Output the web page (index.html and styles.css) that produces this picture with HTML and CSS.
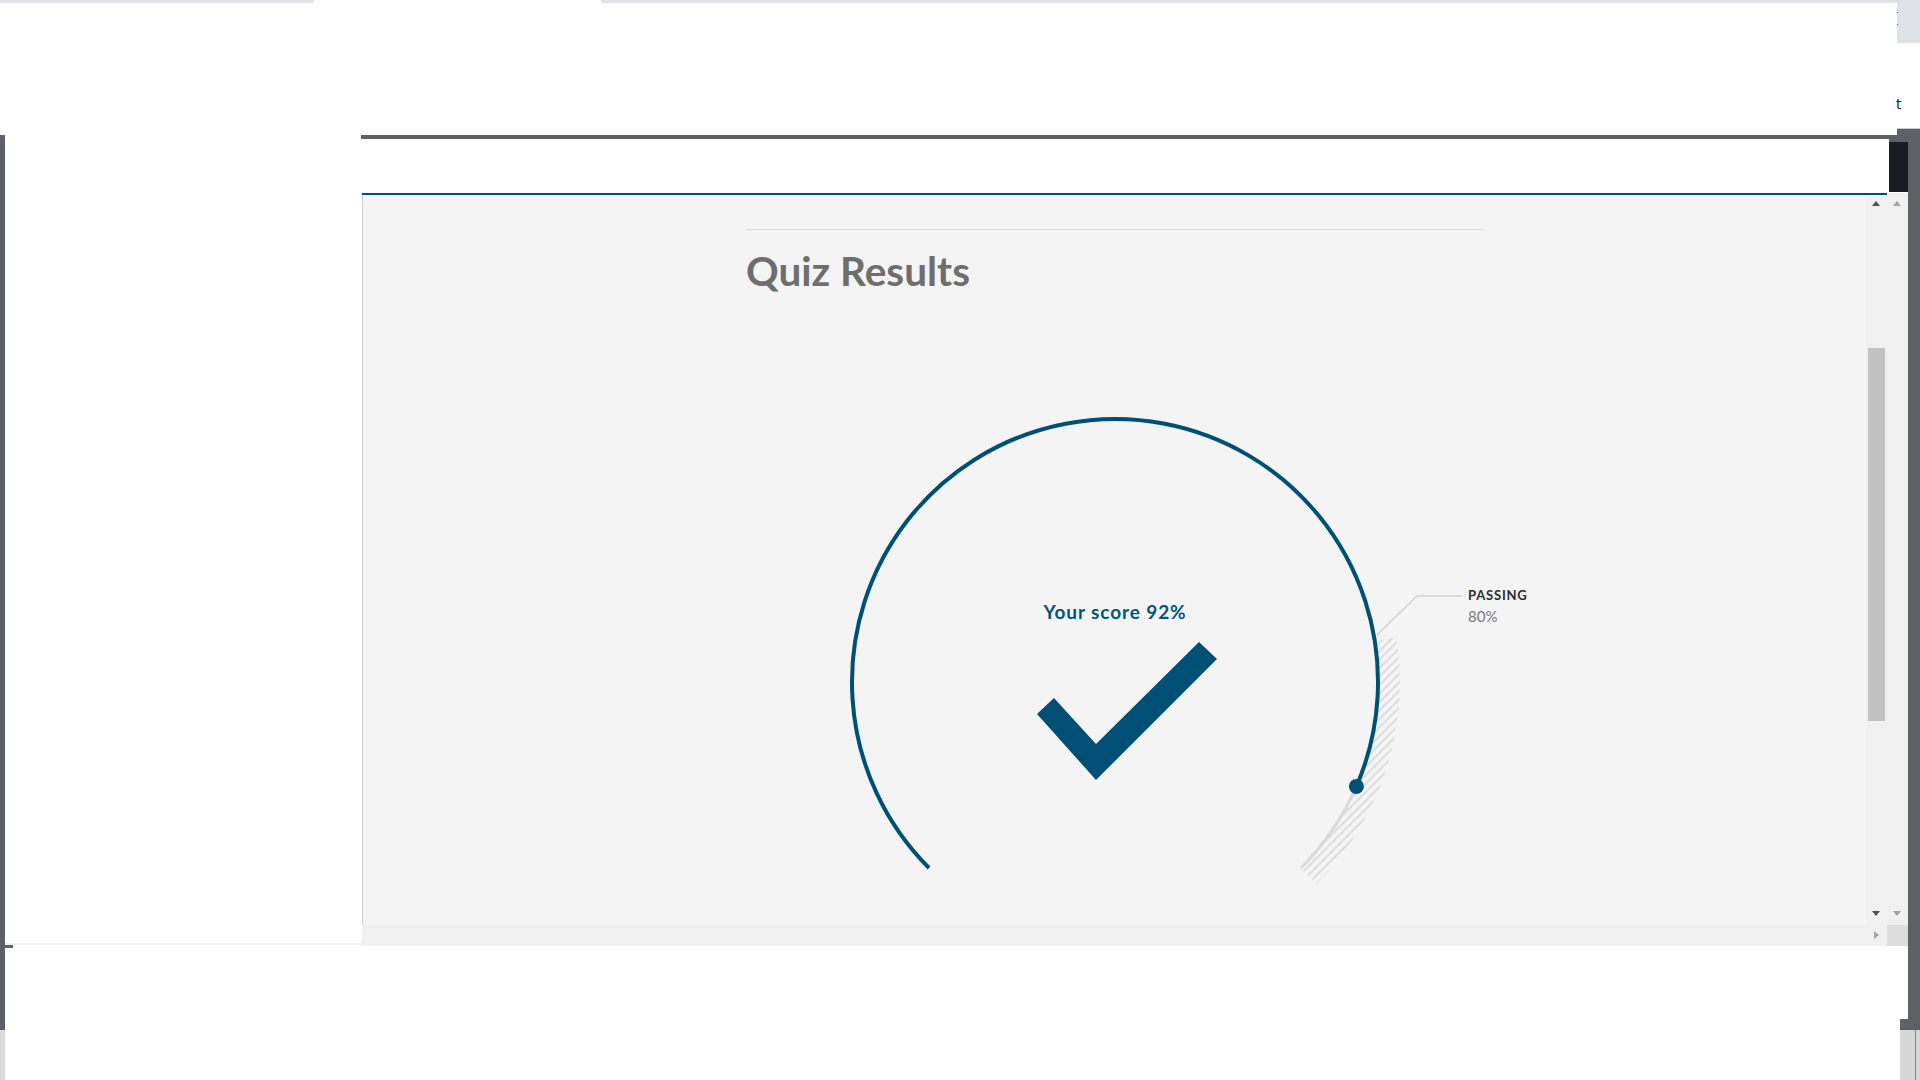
FILE: index.html
```html
<!DOCTYPE html>
<html lang="en">
<head>
<meta charset="utf-8">
<title>Quiz Results</title>
<link rel="stylesheet" href="styles.css">
</head>
<body>
  <div class="tabstrip"><div class="tab"></div></div>
  <div class="corner-btn"><span class="dot"></span><span class="dot"></span></div>
  <span class="cut-t">t</span>

  <div class="left-rail"></div>
  <div class="left-tick"></div>
  <div class="left-base"></div>
  <div class="left-pane-edge"></div>

  <div class="win-top"></div>
  <div class="right-cap"></div>
  <div class="right-rail"></div>
  <div class="br-cap"></div>
  <div class="br-gray"><span class="br-line"></span></div>

  <div class="panel">
    <div class="panel-head">
      <div class="head-edge"><div class="head-block"></div></div>
    </div>
    <div class="panel-main">
      <div class="viewport">
        <div class="blue-rule"></div>
        <div class="view-row">
          <div class="content">
            <div class="results">
              <h1 class="title">Quiz Results</h1>
            </div>
            <svg class="gauge" width="841" height="520" viewBox="0 0 841 520">
              <defs>
                <pattern id="hatch" width="6" height="6" patternUnits="userSpaceOnUse" patternTransform="rotate(-45)">
                  <line x1="0" y1="3" x2="6" y2="3" stroke="#c9c9c9" stroke-width="1.1"></line>
                </pattern>
              </defs>
              <path d="M680.8 258.9 L702.5 255.4 A285 285 0 0 1 622.5 501.5 L607 486 A263 263 0 0 0 680.8 258.9Z" fill="url(#hatch)"></path>
              <path d="M235.03 485.97 A263 263 0 1 1 606.97 485.97" fill="none" stroke="#d8d8d8" stroke-width="3"></path>
              <path d="M235.03 485.97 A263 263 0 1 1 662.4 404.4" fill="none" stroke="#005075" stroke-width="4"></path>
              <circle cx="662.4" cy="404.4" r="7.5" fill="#005075"></circle>
              <polyline points="683,253 723,214 768,214" fill="none" stroke="#d0d0d0" stroke-width="1.5"></polyline>
              <text x="774" y="218" class="pass-label">PASSING</text>
              <text x="774" y="240" class="pass-value">80%</text>
              <text x="421" y="237" text-anchor="middle" class="score">Your score 92%</text>
              <polygon points="343,332 360,316 402,362 505,260 523,277 402,398" fill="#005075"></polygon>
            </svg>
          </div>
          <div class="vscroll">
            <span class="arrow-up dark"></span>
            <div class="thumb"></div>
            <span class="arrow-down dark"></span>
          </div>
        </div>
        <div class="hscroll"><span class="arrow-right"></span></div>
      </div>
      <div class="outer-scroll">
        <div class="os-track">
          <span class="arrow-up light"></span>
          <span class="arrow-down light"></span>
        </div>
        <div class="os-corner"></div>
      </div>
    </div>
  </div>
</body>
</html>
```

FILE: styles.css
```css
* { box-sizing: border-box; }
html, body {
  margin: 0;
  padding: 0;
  width: 1920px;
  height: 1080px;
  overflow: hidden;
  background: #ffffff;
  font-family: Lato, "Open Sans", sans-serif;
}

/* browser chrome remnants */
.tabstrip {
  position: absolute;
  left: 0; top: 0;
  width: 1920px; height: 3px;
  background: #dee1e6;
}
.tab {
  position: absolute;
  left: 313px; top: 0;
  width: 289px; height: 3px;
  background: #ffffff;
  border-radius: 3px 3px 0 0;
}
.corner-btn {
  position: absolute;
  left: 1897px; top: 3px;
  width: 23px; height: 40px;
  background: #dee1e6;
  display: flex;
  flex-direction: column;
  gap: 11px;
  padding-top: 9px;
}
.dot {
  display: block;
  width: 1px; height: 1px;
  background: #555;
}
.cut-t {
  position: absolute;
  left: 1896px; top: 96px;
  font-family: "DejaVu Sans", sans-serif;
  font-size: 14px;
  line-height: 17px;
  color: #202124;
}

/* desktop window frames */
.left-rail {
  position: absolute;
  left: 0; top: 135px;
  width: 5px; height: 895px;
  background: #5f6066;
}
.left-tick {
  position: absolute;
  left: 0; top: 943px;
  width: 13px; height: 5px;
  background: #5f6066;
}
.left-base {
  position: absolute;
  left: 0; top: 1030px;
  width: 5px; height: 50px;
  background: #d9d9d9;
}
.left-pane-edge {
  position: absolute;
  left: 5px; top: 943px;
  width: 357px; height: 2px;
  background: #efefef;
}
.win-top {
  position: absolute;
  left: 361px; top: 135px;
  width: 1559px; height: 4px;
  background: #5f6066;
}
.right-cap {
  position: absolute;
  left: 1897px; top: 128px;
  width: 23px; height: 7px;
  background: #5f6066;
  border-top: 1px solid #c9c9cc;
}
.right-rail {
  position: absolute;
  left: 1908px; top: 135px;
  width: 12px; height: 884px;
  background: #5f6066;
}
.br-cap {
  position: absolute;
  left: 1900px; top: 1019px;
  width: 20px; height: 11px;
  background: #5f6066;
}
.br-gray {
  position: absolute;
  left: 1900px; top: 1030px;
  width: 20px; height: 50px;
  background: #d6d6d6;
}
.br-line {
  position: absolute;
  left: 15px; top: 0;
  width: 1px; height: 50px;
  background: #8a8a8a;
}

/* main panel */
.panel {
  position: absolute;
  left: 362px; top: 139px;
  width: 1546px; height: 807px;
  display: flex;
  flex-direction: column;
}
.panel-head {
  height: 54px;
  background: #ffffff;
  display: flex;
  justify-content: flex-end;
}
.head-edge {
  width: 19px;
  height: 54px;
  background: linear-gradient(#5f6066 0 3px, #ffffff 3px);
  padding-top: 3px;
}
.head-block {
  height: 50px;
  background: #1a1c22;
}
.panel-main {
  flex: 1;
  display: flex;
}
.viewport {
  flex: 1;
  display: flex;
  flex-direction: column;
}
.blue-rule {
  height: 2px;
  background: #005075;
}
.view-row {
  height: 730px;
  display: flex;
}
.content {
  flex: 1;
  background: #f4f4f4;
  border-left: 1px solid #cfcfcf;
  overflow: hidden;
}
.results {
  width: 737px;
  margin: 34px auto 0;
  border-top: 1px solid #d9d9d9;
}
.title {
  margin: 17px 0 0;
  font-family: Lato, sans-serif;
  font-weight: 700;
  font-size: 40.5px;
  line-height: 48px;
  color: #6e6e6e;
}
.gauge {
  display: block;
  margin: 87px auto 0;
}
.score {
  font-family: Lato, sans-serif;
  font-weight: 700;
  font-size: 19px;
  letter-spacing: 0.9px;
  fill: #00557a;
}
.pass-label {
  font-family: Lato, sans-serif;
  font-weight: 700;
  font-size: 13px;
  letter-spacing: 0.8px;
  fill: #2b2b2b;
}
.pass-value {
  font-family: Lato, sans-serif;
  font-weight: 400;
  font-size: 15px;
  fill: #7a7a7a;
}

/* scrollbars */
.vscroll {
  width: 21px;
  background: #f0f0f0;
  position: relative;
}
.thumb {
  position: absolute;
  left: 2px; top: 153px;
  width: 17px; height: 373px;
  background: #c1c1c1;
}
.arrow-up, .arrow-down {
  position: absolute;
  left: 6px;
  width: 0; height: 0;
  border-left: 4.5px solid transparent;
  border-right: 4.5px solid transparent;
}
.arrow-up { top: 6px; border-bottom: 5px solid #505050; }
.arrow-down { bottom: 9px; border-top: 5px solid #505050; }
.arrow-up.light { top: 8px; border-bottom-color: #a3a3a3; }
.arrow-down.light { bottom: 9px; border-top-color: #a3a3a3; }
.hscroll {
  height: 21px;
  background: #f0f0f0;
  position: relative;
}
.arrow-right {
  position: absolute;
  right: 8px; top: 6px;
  width: 0; height: 0;
  border-top: 4.5px solid transparent;
  border-bottom: 4.5px solid transparent;
  border-left: 5px solid #a3a3a3;
}
.outer-scroll {
  width: 21px;
  display: flex;
  flex-direction: column;
}
.os-track {
  flex: 1;
  background: #f0f0f0;
  position: relative;
}
.os-corner {
  height: 21px;
  background: #dcdcdc;
}
```
